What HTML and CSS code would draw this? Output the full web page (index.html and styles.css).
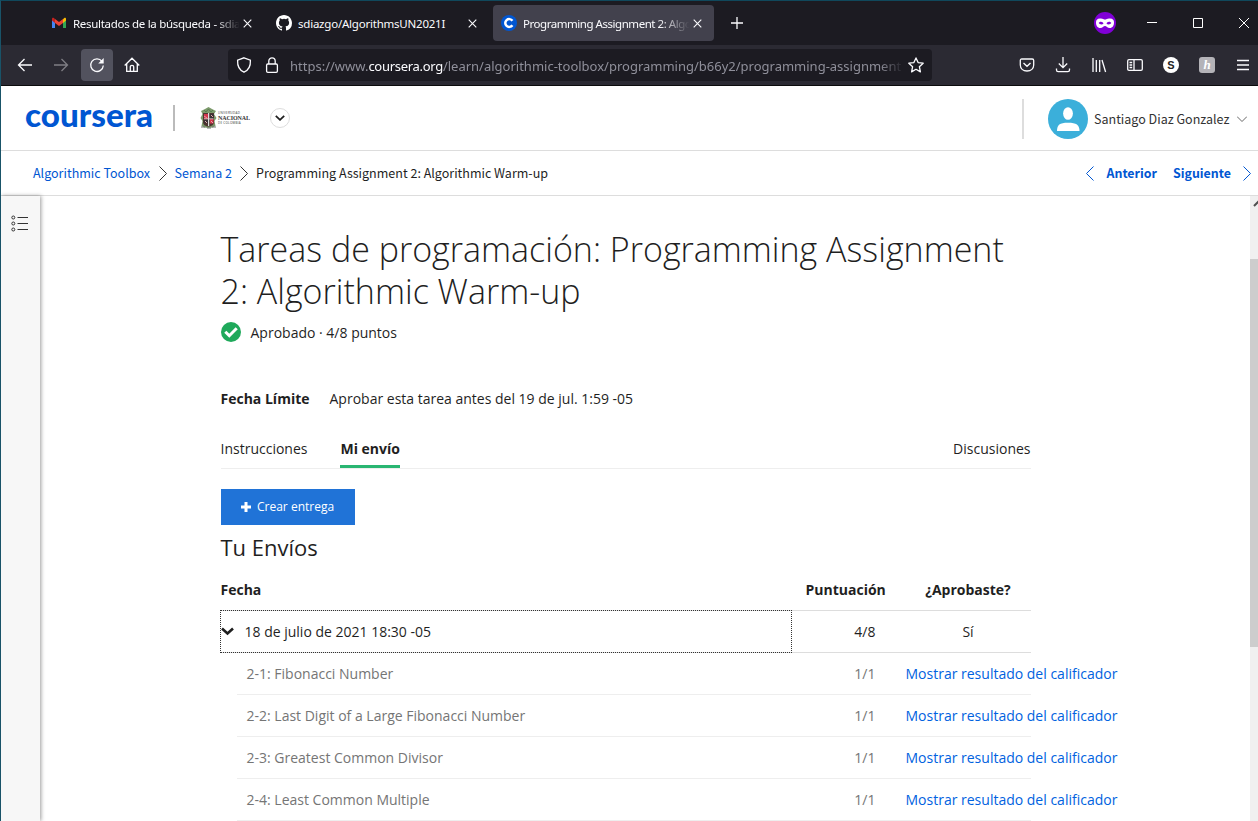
FILE: index.html
```html
<!DOCTYPE html>
<html lang="es">
<head>
<meta charset="utf-8">
<title>Programming Assignment 2: Algorithmic Warm-up | Coursera</title>
<link rel="stylesheet" href="styles.css">
</head>
<body>
<div class="window">
  <div class="tabbar">
    <div class="tab tab-gmail">
      <svg class="favicon" width="16" height="16" viewBox="0 0 16 16"><path d="M1 3.500v9.500h3V7.200L1 4z" fill="#4285f4"/><path d="M12 7v6h3V4z" fill="#34a853"/><path d="M12 4.500v3.500l3-2.500V4c0-1.600-1.700-2-3 0.500z" fill="#fbbc04"/><path d="M4 4v4l4 3 4-3V4L8 7z" fill="#ea4335"/><path d="M1 4v1.500L4 8V4.200C2.500 2 1 2.500 1 4z" fill="#c5221f"/></svg>
      <span class="tab-label fade-gmail">Resultados de la búsqueda - sdia</span>
      <svg class="close" width="9" height="9" viewBox="0 0 9 9"><path d="M.7.7l7.600 7.600M8.300.7L.7 8.300"/></svg>
    </div>
    <div class="tab tab-github">
      <svg class="favicon" width="16" height="16" viewBox="0 0 16 16"><path fill="#fff" d="M8 0C3.580 0 0 3.580 0 8c0 3.540 2.290 6.530 5.470 7.590.4.070.55-.17.55-.38 0-.19-.01-.82-.01-1.490-2.010.37-2.530-.49-2.690-.94-.09-.23-.48-.94-.82-1.130-.28-.15-.68-.52-.01-.53.63-.01 1.080.58 1.230.82.72 1.210 1.870.87 2.330.66.070-.52.28-.87.51-1.070-1.780-.2-3.640-.89-3.640-3.950 0-.87.31-1.590.82-2.150-.08-.2-.36-1.020.08-2.120 0 0 .67-.21 2.200.82a7.600 7.600 0 0 1 4 0c1.530-1.040 2.200-.82 2.200-.82.44 1.100.16 1.920.08 2.120.51.56.82 1.270.82 2.150 0 3.070-1.870 3.750-3.650 3.950.29.25.54.73.54 1.480 0 1.070-.01 1.930-.01 2.200 0 .21.15.46.55.38A8.010 8.010 0 0 0 16 8c0-4.420-3.580-8-8-8z"/></svg>
      <span class="tab-label">sdiazgo/AlgorithmsUN2021I</span>
      <svg class="close" width="9" height="9" viewBox="0 0 9 9"><path d="M.7.7l7.600 7.600M8.300.7L.7 8.300"/></svg>
    </div>
    <div class="tab tab-active">
      <svg class="favicon" width="16" height="16" viewBox="0 0 16 16"><circle cx="8" cy="8" r="8" fill="#0056d2"/><path d="M11.400 10.200A3.900 3.900 0 1 1 11.400 5.800" fill="none" stroke="#fff" stroke-width="2.500"/></svg>
      <span class="tab-label fade-active">Programming Assignment 2: Algo</span>
      <svg class="close" width="9" height="9" viewBox="0 0 9 9"><path d="M.7.7l7.600 7.600M8.300.7L.7 8.300"/></svg>
    </div>
    <svg class="newtab" width="12" height="12" viewBox="0 0 12 12"><path d="M6 0v12M0 6h12" stroke="#fbfbfe" stroke-width="1.300"/></svg>
    <div class="window-controls">
      <svg width="22" height="22" viewBox="0 0 22 22"><circle cx="11" cy="11" r="11" fill="#8000d7"/><path fill-rule="evenodd" fill="#fff" d="M6 6.500C8.500 6 9.500 7.500 11 7.500S13.500 6 16 6.500c3 .2 4 1.500 4 4 0 3-1.500 5.500-4.200 5.500-2.500 0-3.300-2-4.800-2s-2.300 2-4.800 2C3.500 16 2 13.500 2 10.500c0-2.500 1-3.800 4-4zM7 9.800c-1.200 0-2 .6-2.300 1.200.7 1.600 3.800 1.900 4.800.5C9 10.500 8.300 9.800 7 9.800zm8 0c-1.300 0-2 .7-2.500 1.700 1 1.400 4.100 1.100 4.800-.5-.3-.6-1.100-1.200-2.300-1.200z"/></svg>
      <svg class="ctl" width="10" height="10" viewBox="0 0 10 10"><path d="M0 4.500h10"/></svg>
      <svg class="ctl" width="10" height="10" viewBox="0 0 10 10"><path d="M.5.5h9v9h-9z"/></svg>
      <svg class="ctl" width="10" height="10" viewBox="0 0 10 10"><path d="M0 0l10 10M10 0L0 10"/></svg>
    </div>
  </div>

  <div class="toolbar">
    <div class="nav-icons">
      <svg class="ico" width="16" height="16" viewBox="0 0 16 16"><path d="M15 8H1.500M7.500 2L1.500 8l6 6"/></svg>
      <svg class="ico dim" width="16" height="16" viewBox="0 0 16 16"><path d="M1 8h13.500M8.500 2l6 6-6 6"/></svg>
      <span class="reload"><svg class="ico" width="16" height="16" viewBox="0 0 16 16"><path d="M13 4.300A6.300 6.300 0 1 0 14.300 8.500"/><path d="M14.700 1v5.500H9.200z" fill="#fbfbfe" stroke="none"/></svg></span>
      <svg class="ico" width="16" height="16" viewBox="0 0 16 16"><path d="M.7 8.500L8 1.200l7.300 7.300M2.700 7v7.300h10.600V7M6.300 14V9.800c0-1 .6-1.500 1.700-1.500s1.700.5 1.700 1.500V14"/></svg>
    </div>
    <div class="urlbar">
      <svg class="ico" width="16" height="16" viewBox="0 0 16 16"><path d="M8 .8l6.400 2.400c.3 5.300-1.200 9.600-6.400 12C2.800 12.800 1.300 8.500 1.600 3.200z"/></svg>
      <svg class="ico" width="14" height="16" viewBox="0 0 14 16"><path d="M1.600 8.200c0-.8.500-1.200 1.200-1.200h8.400c.7 0 1.200.4 1.200 1.200v5.900c0 .8-.5 1.200-1.200 1.200H2.800c-.7 0-1.200-.4-1.200-1.200zM3.800 7V4c0-4.200 6.400-4.200 6.400 0v3"/></svg>
      <span class="url">https://www.<b>coursera.org</b>/learn/algorithmic-toolbox/programming/b66y2/programming-assignment</span>
      <svg class="ico" width="16" height="16" viewBox="0 0 16 16"><path stroke-linejoin="round" d="M8 .9l2.100 4.700 5.100.6-3.800 3.500 1 5.200L8 12.300l-4.400 2.600 1-5.200L.8 6.200l5.100-.6z"/></svg>
    </div>
    <div class="actions">
      <svg class="ico" width="16" height="16" viewBox="0 0 16 16"><path d="M2.800 2h10.400c1 0 1.500.5 1.500 1.500V8c0 3.500-2.700 6-6.700 6s-6.700-2.500-6.700-6V3.500C1.300 2.500 1.800 2 2.800 2zM4.500 6L8 9.300 11.500 6"/></svg>
      <svg class="ico" width="16" height="16" viewBox="0 0 16 16"><path d="M8 0v10.500M3.800 6.500L8 10.700l4.200-4.200M1.500 11.500V13c0 1 .5 1.700 1.700 1.700h9.600c1.200 0 1.700-.7 1.700-1.700v-1.500"/></svg>
      <svg class="ico" width="16" height="16" viewBox="0 0 16 16"><path d="M2 1v14M5.300 3v12M8.700 3v12M11 3l3.600 12"/></svg>
      <svg class="ico" width="16" height="16" viewBox="0 0 16 16"><path d="M2 2.700h12c.8 0 1.300.4 1.300 1.300v8c0 .9-.5 1.300-1.300 1.300H2c-.8 0-1.300-.4-1.300-1.300V4c0-.9.500-1.300 1.300-1.300zM7 3v10M2.500 5.500h2.700M2.500 8h2.700M2.500 10.500h2.700"/></svg>
      <span class="s-badge">S</span>
      <span class="h-badge">h</span>
      <svg class="ico" width="12" height="16" viewBox="0 0 12 16"><path d="M0 3.500h12M0 8h12M0 12.500h12"/></svg>
    </div>
  </div>

  <header class="site-header">
    <svg class="logo" width="132" height="42" viewBox="0 0 132 42"><text x="1" y="30" textLength="128" lengthAdjust="spacingAndGlyphs">coursera</text></svg>
    <span class="divider"></span>
    <div class="partner">
      <svg width="17" height="22" viewBox="0 0 17 22"><path d="M5 2l3.500-2L12 2l4 2-2 3 2.500 4-2 3 1 5-3 1.500-4 .5-4-.5-3-1.500 1-5-2-3L2.500 7 1 4z" fill="#7c9a6b"/><path d="M3 6h11v9c0 3-3 4.500-5.500 4.500S3 18 3 15z" fill="#4c3531"/><path d="M4 7h4v5H4zM10 12h3.500v4.500H10z" fill="#d2364b"/><path d="M10 7h3.500v4H10zM4 13h4v3H4z" fill="#393236"/><path d="M8 6h1.200v13H8zM4 11.500h9.500v.8H4z" fill="#ddd"/><path d="M4 9l3 2M11 14l2 2M11 8l2 2M5 14l2 2" stroke="#e6a5ad" stroke-width="1"/><path d="M4 3l2 2 2.500-3L11 5l2-2" fill="none" stroke="#5b7d51"/><path d="M1 20h4M7 21h4M12 20h4" stroke="#777"/></svg>
      <span class="partner-name"><i class="tiny">UNIVERSIDAD</i><i class="big">NACIONAL</i><i class="tiny">DE COLOMBIA</i></span>
    </div>
    <span class="round-btn"><svg width="10" height="6" viewBox="0 0 10 6"><path d="M.8.8L5 4.800 9.200.8" fill="none" stroke="#1f1f1f" stroke-width="1.800"/></svg></span>
    <div class="user">
      <svg width="40" height="40" viewBox="0 0 40 40"><circle cx="20" cy="20" r="20" fill="#3bafda"/><ellipse cx="20" cy="14.500" rx="4.900" ry="6.300" fill="#fff"/><path d="M9 32c0-6 2.500-8.200 11-8.200S31.500 26 31.500 32z" fill="#fff"/></svg>
      <span class="user-name">Santiago Diaz Gonzalez</span>
      <svg width="10" height="6" viewBox="0 0 10 6"><path d="M0 .5l5 5 5-5" fill="none" stroke="#666"/></svg>
    </div>
  </header>

  <nav class="crumbs">
    <a class="c1">Algorithmic Toolbox</a>
    <svg class="chev" width="8" height="15" viewBox="0 0 8 15"><path d="M.5.5l7 7-7 7"/></svg>
    <a class="c2">Semana 2</a>
    <svg class="chev" width="8" height="15" viewBox="0 0 8 15"><path d="M.5.5l7 7-7 7"/></svg>
    <span class="c3">Programming Assignment 2: Algorithmic Warm-up</span>
    <div class="pager">
      <svg class="chev blue" width="8" height="15" viewBox="0 0 8 15"><path d="M7.500.5l-7 7 7 7"/></svg>
      <a class="prev">Anterior</a>
      <a class="next">Siguiente</a>
      <svg class="chev blue" width="8" height="15" viewBox="0 0 8 15"><path d="M.5.5l7 7-7 7"/></svg>
    </div>
  </nav>

  <div class="body">
    <aside class="rail">
      <svg width="18" height="17" viewBox="0 0 18 17" fill="none" stroke="#333"><circle cx="2.300" cy="2.500" r="1.500"/><circle cx="2.300" cy="8.500" r="1.500"/><circle cx="2.300" cy="14.500" r="1.500"/><path d="M6.500 2.500H17M6.500 8.500H17M6.500 14.500H17"/></svg>
    </aside>
    <main class="main">
      <h1>Tareas de programación: Programming Assignment 2: Algorithmic Warm-up</h1>
      <div class="status">
        <svg width="20" height="20" viewBox="0 0 20 20"><circle cx="10" cy="10" r="10" fill="#1fa95b"/><path d="M4.300 9.700l4 4 7.400-7.500" fill="none" stroke="#fff" stroke-width="3"/></svg>
        <span>Aprobado · 4/8 puntos</span>
      </div>
      <div class="deadline"><b>Fecha Límite</b><span>Aprobar esta tarea antes del 19 de jul. 1:59 -05</span></div>
      <div class="tabs"><span>Instrucciones</span><b>Mi envío</b><span class="last">Discusiones</span></div>
      <button class="create"><svg width="10" height="10" viewBox="0 0 10 10"><path d="M5 0v10M0 5h10" stroke="#fff" stroke-width="3"/></svg><span>Crear entrega</span></button>
      <h2>Tu Envíos</h2>
      <div class="row head"><span>Fecha</span><span class="pts">Puntuación</span><span class="ok">¿Aprobaste?</span></div>
      <div class="row attempt">
        <span class="when"><svg width="13" height="9" viewBox="0 0 13 9"><path d="M1 1.500l5.500 5 5.500-5" fill="none" stroke="#1f1f1f" stroke-width="2.600"/></svg>18 de julio de 2021 18:30 -05</span>
        <span class="score">4/8</span><span class="yes">Sí</span>
      </div>
      <div class="row part"><span>2-1: Fibonacci Number</span><span class="score">1/1</span><a>Mostrar resultado del calificador</a></div>
      <div class="row part"><span>2-2: Last Digit of a Large Fibonacci Number</span><span class="score">1/1</span><a>Mostrar resultado del calificador</a></div>
      <div class="row part"><span>2-3: Greatest Common Divisor</span><span class="score">1/1</span><a>Mostrar resultado del calificador</a></div>
      <div class="row part"><span>2-4: Least Common Multiple</span><span class="score">1/1</span><a>Mostrar resultado del calificador</a></div>
    </main>
    <div class="scrollbar"><svg width="8" height="14" viewBox="0 0 8 14"><path d="M4 10l4-4 4 4" fill="none" stroke="#505050" stroke-width="2"/></svg><span class="thumb"></span></div>
  </div>
</div>
</body>
</html>
```
FILE: styles.css
```css
* { box-sizing: border-box; }
body { margin: 0; background: #fff; font-family: "Open Sans", sans-serif; font-size: 14px; color: #1f1f1f; overflow: hidden; }
svg { display: block; flex: none; }
.window { width: 1258px; height: 821px; overflow: hidden; border-left: 1px solid #195368; border-top: 1px solid #10485c; display: flex; flex-direction: column; }

.tabbar { height: 44px; flex: none; background: #1c1b22; display: flex; align-items: center; color: #fbfbfe; font-family: "Noto Sans", sans-serif; font-size: 11.500px; }
.tab { display: flex; align-items: center; height: 36px; border-radius: 4px; white-space: nowrap; }
.favicon { margin-right: 6px; }
.tab-label { overflow: hidden; flex: none; line-height: 18px; padding-top: 1px; letter-spacing: -0.22px; }
.tab-gmail { margin-left: 50px; width: 225px; }
.tab-gmail .tab-label { width: 170px; }
.tab-github { width: 217px; }
.tab-github .tab-label { width: 170px; }
.tab-active { width: 221px; padding-left: 8px; background: #42414d; }
.tab-active .tab-label { width: 170px; }
.tab-label.fade-gmail { mask-image: linear-gradient(to right, #000 84%, transparent 98%); letter-spacing: -0.3px; }
.tab-label.fade-active { mask-image: linear-gradient(to right, #000 80%, transparent 98%); letter-spacing: -0.46px; }
.close path { fill: none; stroke: #fbfbfe; stroke-width: 1.1; }
.newtab { margin-left: 17px; }
.window-controls { margin-left: auto; display: flex; align-items: center; padding-right: 9px; }
.ctl { fill: none; stroke: #fff; stroke-width: 1; }
.ctl:nth-child(2) { margin-left: 31px; }
.ctl:nth-child(n+3) { margin-left: 36px; }

.toolbar { height: 41px; flex: none; background: #2b2a33; border-bottom: 1px solid #0c0c0d; display: flex; align-items: center; }
.ico { fill: none; stroke: #fbfbfe; stroke-width: 1.3; }
.dim { opacity: .4; }
.nav-icons { display: flex; align-items: center; width: 227px; padding-left: 16px; }
.nav-icons .dim { margin-left: 20px; }
.reload { display: flex; align-items: center; justify-content: center; width: 32px; height: 32px; margin: 0 11px 0 12px; background: #52525e; border-radius: 4px; }
.urlbar { width: 704px; height: 32px; display: flex; align-items: center; background: #1c1b22; border-radius: 4px; padding: 0 8px; }
.urlbar .ico:nth-child(2) { margin-left: 13px; }
.url { margin-left: 11px; padding-top: 2px; width: 614px; flex: none; overflow: hidden; white-space: nowrap; font-family: "Noto Sans", sans-serif; font-size: 13px; letter-spacing: 0; color: #8f8f9a; mask-image: linear-gradient(to right, #000 96%, transparent); margin-right: 4px; }
.url b { font-weight: 400; color: #fbfbfe; letter-spacing: -0.3px; }
.actions { display: flex; align-items: center; gap: 20px; margin-left: auto; padding-right: 9px; }
.s-badge { width: 16px; height: 16px; border-radius: 50%; background: #fff; color: #222; font: bold 11px/16px "Liberation Sans", sans-serif; text-align: center; }
.h-badge { width: 16px; height: 16px; border-radius: 3px; background: #b4b3b8; color: #fff; font: italic bold 13px/16px "Liberation Serif", serif; text-align: center; }
.actions > :last-child { margin-left: 2px; }

.site-header { height: 65px; flex: none; border-bottom: 1px solid #ddd; display: flex; align-items: center; padding-left: 23px; }
.logo text { font-family: Lato, sans-serif; font-weight: 900; font-size: 32px; fill: #0056d2; }
.divider { width: 2px; height: 26px; background: #bbb; margin-left: 17px; }
.partner { display: flex; align-items: center; gap: 1px; width: 51px; margin-left: 25px; }
.partner-name { display: flex; flex-direction: column; color: #333; }
.partner-name i { font-style: normal; white-space: nowrap; }
.partner-name .tiny { font-size: 3px; line-height: 4px; letter-spacing: .25px; }
.partner-name .big { font: bold 6px/6px "Liberation Serif", serif; letter-spacing: -0.1px; }
.round-btn { width: 20px; height: 20px; border: 1px solid #ddd; border-radius: 50%; display: flex; align-items: center; justify-content: center; margin-left: 19px; }
.user { margin: 2px 0 0 auto; display: flex; align-items: center; height: 40px; border-left: 2px solid #ddd; padding: 0 11px 0 24px; }
.user-name { margin: 0 6px 2px; width: 137px; white-space: nowrap; color: #333; }
.user-name, .crumbs { font-family: "Noto Sans CJK SC", sans-serif; font-size: 12.530px; }

.crumbs { height: 45px; flex: none; border-bottom: 1px solid #ddd; display: flex; align-items: center; padding: 0 6px 0 32px; white-space: nowrap; }
.crumbs a, .c3 { margin-bottom: 1px; }
.crumbs a { color: #0056d2; }
.c1 { width: 126px; }
.c2 { width: 65.500px; margin-left: 7.500px; }
.c3 { margin-left: 8px; }
.chev { fill: none; stroke: #333; stroke-width: 1; }
.chev.blue { stroke: #0056d2; }
.pager { margin-left: auto; display: flex; align-items: center; font-weight: 700; font-size: 12.400px; margin-right: 1px; }
.prev { margin-left: 13px; width: 66.500px; }
.next { width: 70px; }

.body { flex: 1; min-height: 0; display: flex; }
.rail { width: 39px; flex: none; background: #f7f7f7; box-shadow: 1px 0 4px rgba(0,0,0,.4); padding: 19px 0 0 10px; }
.main { width: 810px; margin-left: 180.5px; flex: none; padding-top: 32px; white-space: nowrap; }
h1 { margin: 0; font-weight: 300; font-size: 34px; line-height: 42px; white-space: normal; }
.status { display: flex; align-items: center; gap: 10px; height: 20px; margin-top: 10px; }
.deadline { display: flex; gap: 20px; line-height: 20px; margin-top: 47px; }
.tabs { display: flex; height: 40px; margin-top: 20px; border-bottom: 1px solid #eee; line-height: 20px; padding-top: 10px; }
.tabs b { margin-left: 33px; height: 29px; border-bottom: 3px solid #2ab672; }
.tabs .last { margin-left: auto; }
.create { width: 134px; height: 36px; margin: 20px 0 0; border: 0; background: #2073d7; color: #fff; font: 12px "Open Sans", sans-serif; display: flex; align-items: center; gap: 6px; padding: 0 0 1px 20.500px; white-space: nowrap; }
h2 { margin: 7px 0 0; font-weight: 400; font-size: 22px; line-height: 30px; }
.row { display: flex; align-items: center; height: 42px; border-bottom: 1px solid #eee; }
.head { margin-top: 7px; height: 42px; border-color: #ddd; font-weight: 700; }
.head .pts { margin-left: auto; width: 80px; }
.head .ok { width: 125px; text-align: center; margin-left: 20px; }
.attempt { border-color: #ddd; }
.when { display: flex; align-items: center; gap: 11px; width: 572px; height: 43px; border: 1px dotted #333; margin-left: -1px; flex: none; }
.score { width: 84px; text-align: right; flex: none; }
.yes { width: 125px; margin-left: 30px; text-align: center; padding-right: 0; }
.part { margin-left: 16px; padding-left: 10px; color: #757575; }
.part > span:first-child { width: 545px; flex: none; }
.part a { color: #0062e0; margin-left: 30px; }
.scrollbar { margin-left: auto; width: 8px; background: #f0f0f0; }
.thumb { display: block; width: 8px; height: 388px; background: #cdcdcd; margin-top: 49px; }
```
